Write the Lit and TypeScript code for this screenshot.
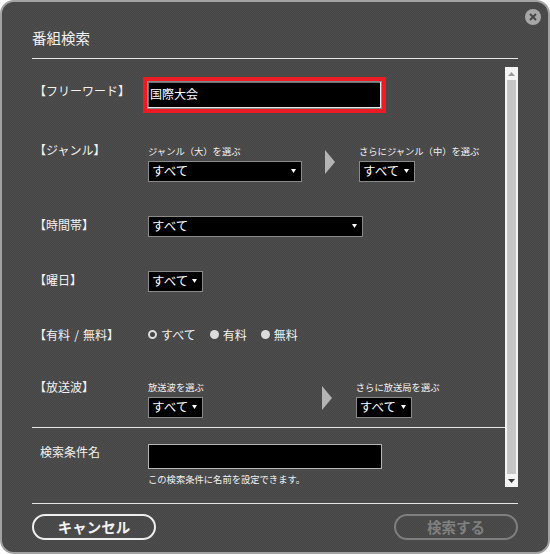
import { LitElement, html, css } from "lit";
import { customElement } from "lit/decorators.js";

const triangle = html`<svg class="caret" width="5" height="4" viewBox="0 0 5 4"><path d="M0 0H5L2.5 4Z" fill="#fff"/></svg>`;

@customElement("app-root")
export class AppRoot extends LitElement {
  static styles = css`
    :host {
      display: block;
      width: 550px;
      height: 554px;
      background: #fff;
      font-family: "Noto Sans CJK JP", "Noto Sans", sans-serif;
      color: #f2f2f2;
      font-size: 12px;
    }
    * { box-sizing: border-box; }
    .dialog {
      position: relative;
      width: 550px;
      height: 554px;
      border: 2px solid #a2a2a2;
      border-radius: 14px;
      padding: 0 30px;
      background-color: #4a4a4a;
      background-image: repeating-conic-gradient(#474747 0 25%, #4c4c4c 0 50%);
      background-size: 2px 2px;
      display: flex;
      flex-direction: column;
    }
    .close {
      position: absolute;
      top: 7px;
      right: 7px;
      width: 16px;
      height: 16px;
      display: block;
    }
    .title {
      height: 57px;
      padding-top: 26px;
      font-size: 14.5px;
      line-height: 20px;
      border-bottom: 1px solid #e6e6e6;
      flex: none;
    }
    .body { display: flex; margin-top: 8px; height: 420px; flex: none; }
    .content { width: 473px; padding-top: 10px; flex: none; }
    .row { display: flex; align-items: flex-start; margin-top: 34px; }
    .row.first { margin-top: 0; }
    .row.genre { margin-top: 28px; }
    .label { width: 116px; padding-left: 2px; line-height: 18px; height: 18px; flex: none; white-space: nowrap; word-spacing: 1.5px; }
    .label.plain { padding-left: 8px; margin-top: -1px; }
    .label.tall { margin-top: 5px; }
    .fields { display: flex; align-items: flex-start; }
    .fields.pad4 { padding-top: 3px; }
    .fields.pad3 { padding-top: 2px; }
    .col { display: flex; flex-direction: column; }
    .sub { font-size: 9.3px; line-height: 15px; height: 17px; white-space: nowrap; }
    .arrow { display: block; flex: none; }
    .select {
      height: 21px;
      background: #000;
      border: 1px solid #8a8a8a;
      display: flex;
      align-items: flex-start;
      justify-content: space-between;
      padding: 0 5px 0 3px;
      font-size: 12.5px;
      line-height: 17px;
      color: #fff;
    }
    .caret { display: block; flex: none; margin-top: 7px; }
    .s154 { width: 154px; }
    .s215 { width: 215px; }
    .s56 { width: 56px; }
    .s55 { width: 55px; }
    .red {
      margin-left: -5px;
      width: 243px;
      height: 36px;
      border: 4px solid #ed1c24;
      flex: none;
    }
    .input {
      height: 100%;
      background: #000;
      border: 1px solid #8a8a8a;
      box-shadow: inset -1px -1px 0 #e8e8e8, inset 1px 1px 0 #6e6e6e;
      padding-left: 2px;
      color: #fff;
      line-height: 23px;
      font-size: 12px;
    }
    .radios { display: flex; align-items: center; height: 17px; }
    .radio { display: flex; align-items: center; margin-right: 14px; }
    .dot { width: 9px; height: 9px; border-radius: 50%; background: #dcdcdc; margin-right: 4px; flex: none; }
    .dot.on { border: 2.5px solid #dcdcdc; background: #444; }
    .rule { border-top: 1px solid #e6e6e6; margin-top: 9px; }
    .name { display: flex; align-items: flex-start; margin-top: 16px; }
    .name-input {
      width: 234px;
      height: 25px;
      background: #000;
      border: 1px solid #b5b5b5;
    }
    .note { font-size: 9.3px; line-height: 14px; height: 14px; margin-top: 3px; white-space: nowrap; }
    .scrollbar {
      width: 13px;
      height: 420px;
      flex: none;
      background: #f4f4f4;
      display: flex;
      flex-direction: column;
      align-items: center;
    }
    .sb-btn { height: 13px; display: flex; align-items: center; justify-content: center; flex: none; width: 100%; }
    .sb-thumb { flex: 1; width: 9px; background: #c6c6c6; }
    .footer {
      margin-top: 16px;
      border-top: 1px solid #e6e6e6;
      padding-top: 10px;
      display: flex;
      justify-content: space-between;
      flex: none;
    }
    .btn {
      width: 124px;
      height: 26px;
      border: 2px solid #efefef;
      border-radius: 13px;
      display: flex;
      align-items: center;
      justify-content: center;
      padding-bottom: 2px;
      font-size: 14.5px;
      font-weight: 700;
      color: #f2f2f2;
    }
    .btn.off { border-color: #7f7f7f; color: #7f7f7f; }
  `;

  private arrow(ml: number, mr: number, mt: number) {
    return html`<svg class="arrow" style="margin:${mt}px ${mr}px 0 ${ml}px" width="10" height="24" viewBox="0 0 10 24"><path d="M0 0L10 12L0 24Z" fill="#b4b4b4"/></svg>`;
  }

  render() {
    return html`
      <div class="dialog">
        <svg class="close" viewBox="0 0 16 16">
          <circle cx="8" cy="8" r="8" fill="#a6a6a6"/>
          <path d="M5 5L11 11M11 5L5 11" stroke="#484848" stroke-width="2"/>
        </svg>
        <div class="title">番組検索</div>
        <div class="body">
          <div class="content">
            <div class="row first">
              <div class="label tall">【フリーワード】</div>
              <div class="red"><div class="input">国際大会</div></div>
            </div>
            <div class="row genre">
              <div class="label">【ジャンル】</div>
              <div class="fields pad4">
                <div class="col">
                  <div class="sub">ジャンル（大）を選ぶ</div>
                  <div class="select s154">すべて${triangle}</div>
                </div>
                ${this.arrow(23, 24, 6)}
                <div class="col">
                  <div class="sub">さらにジャンル（中）を選ぶ</div>
                  <div class="select s56">すべて${triangle}</div>
                </div>
              </div>
            </div>
            <div class="row">
              <div class="label">【時間帯】</div>
              <div class="select s215">すべて${triangle}</div>
            </div>
            <div class="row">
              <div class="label">【曜日】</div>
              <div class="select s55">すべて${triangle}</div>
            </div>
            <div class="row">
              <div class="label">【有料 / 無料】</div>
              <div class="radios">
                <div class="radio"><span class="dot on"></span>すべて</div>
                <div class="radio"><span class="dot"></span>有料</div>
                <div class="radio"><span class="dot"></span>無料</div>
              </div>
            </div>
            <div class="row">
              <div class="label">【放送波】</div>
              <div class="fields pad3">
                <div class="col">
                  <div class="sub">放送波を選ぶ</div>
                  <div class="select s55">すべて${triangle}</div>
                </div>
                ${this.arrow(118, 24, 6)}
                <div class="col">
                  <div class="sub">さらに放送局を選ぶ</div>
                  <div class="select s56">すべて${triangle}</div>
                </div>
              </div>
            </div>
            <div class="rule"></div>
            <div class="name">
              <div class="label plain">検索条件名</div>
              <div class="col">
                <div class="name-input"></div>
                <div class="note">この検索条件に名前を設定できます。</div>
              </div>
            </div>
          </div>
          <div class="scrollbar">
            <div class="sb-btn"><svg width="7" height="4" viewBox="0 0 7 4"><path d="M0 4H7L3.5 0Z" fill="#9a9a9a"/></svg></div>
            <div class="sb-thumb"></div>
            <div class="sb-btn"><svg width="7" height="4" viewBox="0 0 7 4"><path d="M0 0H7L3.5 4Z" fill="#333"/></svg></div>
          </div>
        </div>
        <div class="footer">
          <div class="btn">キャンセル</div>
          <div class="btn off">検索する</div>
        </div>
      </div>
    `;
  }
}
